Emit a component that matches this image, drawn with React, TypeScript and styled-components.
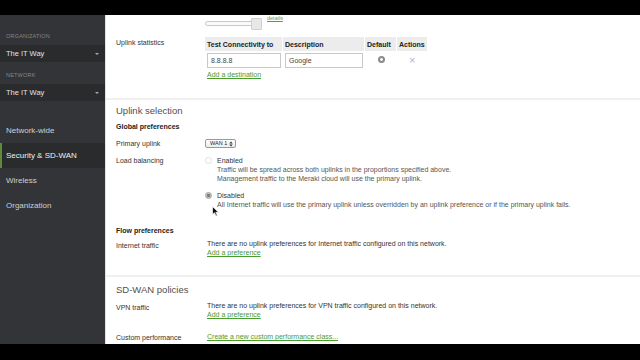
import styled, { createGlobalStyle } from "styled-components";

const GlobalStyle = createGlobalStyle`
  html, body {
    margin: 0;
    padding: 0;
    background: #000;
  }
  body {
    font-family: "Liberation Sans", Arial, Helvetica, sans-serif;
    -webkit-font-smoothing: antialiased;
  }
`;

const orgs = [
  { title: "ORGANIZATION", value: "The IT Way" },
  { title: "NETWORK", value: "The IT Way" },
];

const navItems = ["Network-wide", "Security & SD-WAN", "Wireless", "Organization"];

const App = () => {
  return (
    <Screen>
      <GlobalStyle />
      <BlackBar />
      <Body>
        <Sidebar>
          {orgs.map((o) => (
            <OrgBlock key={o.title}>
              <OrgTitle>{o.title}</OrgTitle>
              <OrgSelect>
                {o.value}
                <Caret />
              </OrgSelect>
            </OrgBlock>
          ))}
          <Nav>
            {navItems.map((item) => (
              <NavItem key={item} $active={item === "Security & SD-WAN"}>
                {item}
              </NavItem>
            ))}
          </Nav>
        </Sidebar>

        <Main>
          <Section $pt={0} $pb={19}>
            <SliderRow>
              <SliderTrack>
                <SliderThumb />
              </SliderTrack>
              <SmallLink>details</SmallLink>
            </SliderRow>

            <Row $mt={8}>
              <Label $pt={1}>Uplink statistics</Label>
              <div>
                <Table>
                  <thead>
                    <tr>
                      <Th $w={78}>Test Connectivity to</Th>
                      <Th $w={82}>Description</Th>
                      <Th $w={32}>Default</Th>
                      <Th $w={30}>Actions</Th>
                    </tr>
                  </thead>
                  <tbody>
                    <tr>
                      <Td>
                        <TextInput>8.8.8.8</TextInput>
                      </Td>
                      <Td>
                        <TextInput>Google</TextInput>
                      </Td>
                      <Td $center>
                        <DefaultDot />
                      </Td>
                      <Td $center>
                        <CloseMark>×</CloseMark>
                      </Td>
                    </tr>
                  </tbody>
                </Table>
                <Link $mt={2}>Add a destination</Link>
              </div>
            </Row>
          </Section>

          <Section $pt={4} $pb={18}>
            <Heading>Uplink selection</Heading>
            <SubHeading $mt={4}>Global preferences</SubHeading>

            <Row $mt={8}>
              <Label>Primary uplink</Label>
              <Value>
                <SelectBox>
                  WAN 1
                  <svg width="4" height="6" viewBox="0 0 4 6">
                    <path d="M0.3 2.4 L2 0.6 L3.7 2.4 Z M0.3 3.6 L2 5.4 L3.7 3.6 Z" fill="#333" />
                  </svg>
                </SelectBox>
              </Value>
            </Row>

            <Row $mt={8}>
              <Label>Load balancing</Label>
              <Value>
                <RadioOption>
                  <Radio $checked={false} />
                  <div>
                    <OptionTitle>Enabled</OptionTitle>
                    <OptionText>
                      Traffic will be spread across both uplinks in the proportions specified above.
                      <br />
                      Management traffic to the Meraki cloud will use the primary uplink.
                    </OptionText>
                  </div>
                </RadioOption>
                <RadioOption $mt={8}>
                  <Radio $checked />
                  <div>
                    <OptionTitle>Disabled</OptionTitle>
                    <OptionText>
                      All Internet traffic will use the primary uplink unless overridden by an uplink
                      preference or if the primary uplink fails.
                    </OptionText>
                  </div>
                </RadioOption>
              </Value>
            </Row>

            <SubHeading $mt={17}>Flow preferences</SubHeading>
            <Row $mt={4}>
              <Label $pt={2}>Internet traffic</Label>
              <Value>
                <Text>There are no uplink preferences for Internet traffic configured on this network.</Text>
                <Link>Add a preference</Link>
              </Value>
            </Row>
          </Section>

          <Section $pt={6} $pb={20}>
            <Heading>SD-WAN policies</Heading>
            <Row $mt={4}>
              <Label $pt={2}>VPN traffic</Label>
              <Value>
                <Text>There are no uplink preferences for VPN traffic configured on this network.</Text>
                <Link>Add a preference</Link>
              </Value>
            </Row>
            <Row $mt={13}>
              <Label $pt={1}>Custom performance classes</Label>
              <Value>
                <Link>Create a new custom performance class...</Link>
              </Value>
            </Row>
          </Section>

          <Cursor width="8" height="11" viewBox="0 0 8 11">
            <path d="M0.5 0.5 L0.5 8.5 L2.5 6.8 L4 10 L5.3 9.4 L3.8 6.3 L6.5 6.2 Z" fill="#111" stroke="#fff" strokeWidth="0.7" />
          </Cursor>
        </Main>
      </Body>
      <BlackBar $h={16} />
    </Screen>
  );
};

const Screen = styled.div`
  width: 640px;
  height: 360px;
  display: flex;
  flex-direction: column;
  overflow: hidden;
  background: #000;
`;

const BlackBar = styled.div<{ $h?: number }>`
  height: ${({ $h }) => $h ?? 15}px;
  flex-shrink: 0;
  background: #000;
  position: relative;
  z-index: 2;
`;

const Body = styled.div`
  flex: 1;
  display: flex;
  min-height: 0;
`;

const Sidebar = styled.div`
  width: 105px;
  flex-shrink: 0;
  background: #323437;
  padding-top: 18px;
  box-sizing: border-box;
`;

const OrgBlock = styled.div`
  margin-bottom: 10px;
`;

const OrgTitle = styled.div`
  font-size: 5.5px;
  letter-spacing: 0.2px;
  color: #85878a;
  padding-left: 6px;
  margin-bottom: 5px;
  line-height: 7px;
`;

const OrgSelect = styled.div`
  height: 17px;
  background: #2a2b2d;
  color: #e2e2e2;
  font-size: 7.5px;
  display: flex;
  align-items: center;
  justify-content: space-between;
  padding: 0 6px;
`;

const Caret = styled.span`
  width: 0;
  height: 0;
  border-left: 2.5px solid transparent;
  border-right: 2.5px solid transparent;
  border-top: 2.5px solid #aaa;
`;

const Nav = styled.div`
  margin-top: 17px;
  display: flex;
  flex-direction: column;
`;

const NavItem = styled.div<{ $active?: boolean }>`
  height: 25px;
  display: flex;
  align-items: center;
  padding-left: 4px;
  font-size: 8px;
  color: ${({ $active }) => ($active ? "#f0f0f0" : "#cfd0d1")};
  background: ${({ $active }) => ($active ? "#2a2b2d" : "transparent")};
  border-left: 2px solid ${({ $active }) => ($active ? "#5e8a3a" : "transparent")};
`;

const Main = styled.div`
  position: relative;
  flex: 1;
  background: #fff;
  border-left: 1px solid #e2e2e2;
  overflow: hidden;
  color: #333;
  line-height: 9px;
`;

const Section = styled.div<{ $pt?: number; $pb?: number }>`
  padding: ${({ $pt }) => $pt ?? 0}px 10px ${({ $pb }) => $pb ?? 20}px 10px;
  border-bottom: 2px solid #f0f0f0;
`;

const SliderRow = styled.div`
  display: flex;
  align-items: flex-start;
  padding-left: 89px;
  height: 14px;
`;

const SliderTrack = styled.div`
  margin-top: 6px;
  width: 50px;
  height: 3px;
  border: 1px solid #c8c8c8;
  border-radius: 3px;
  position: relative;
  background: #fafafa;
`;

const SliderThumb = styled.div`
  position: absolute;
  right: -6px;
  top: -4px;
  width: 9px;
  height: 10px;
  background: #e8e8e8;
  border: 1px solid #d0d0d0;
  border-radius: 1px;
`;

const SmallLink = styled.span`
  margin-left: 10px;
  font-size: 5.5px;
  line-height: 6px;
  color: #5f9c3a;
  text-decoration: underline;
`;

const Row = styled.div<{ $mt?: number }>`
  display: grid;
  grid-template-columns: 89px 1fr;
  margin-top: ${({ $mt }) => $mt ?? 0}px;
`;

const Label = styled.div<{ $pt?: number }>`
  font-size: 7px;
  color: #333;
  padding-top: ${({ $pt }) => $pt ?? 0}px;
  padding-right: 14px;
  line-height: 9px;
`;

const Value = styled.div`
  line-height: 9px;
`;

const Table = styled.table`
  border-collapse: separate;
  border-spacing: 0;
  font-size: 7px;
`;

const Th = styled.th<{ $w: number }>`
  width: ${({ $w }) => $w}px;
  height: 14px;
  background: #ececec;
  text-align: left;
  font-weight: bold;
  color: #222;
  padding: 0 2px;
  border-right: 1px solid #fff;
  box-sizing: border-box;
  white-space: nowrap;
`;

const Td = styled.td<{ $center?: boolean }>`
  padding: 2px 2px 0 2px;
  text-align: ${({ $center }) => ($center ? "center" : "left")};
  vertical-align: middle;
`;

const TextInput = styled.div`
  height: 15px;
  box-sizing: border-box;
  border: 1px solid #c9c9c9;
  display: flex;
  align-items: center;
  padding-left: 3px;
  font-size: 7px;
  color: #444;
`;

const DefaultDot = styled.span`
  display: inline-block;
  width: 7px;
  height: 7px;
  border-radius: 50%;
  background: radial-gradient(circle, #f2f2f2 0 1.2px, #8a8a8a 1.6px);
`;

const CloseMark = styled.span`
  font-size: 11px;
  color: #b5b5b5;
  line-height: 10px;
`;

const Link = styled.div<{ $mt?: number }>`
  font-size: 7px;
  color: #4d9a2f;
  text-decoration: underline;
  margin-top: ${({ $mt }) => $mt ?? 0}px;
  padding-left: 2px;
  line-height: 9px;
  white-space: nowrap;
`;

const Heading = styled.div`
  font-size: 9.5px;
  color: #4f4f4f;
  line-height: 14px;
`;

const SubHeading = styled.div<{ $mt?: number }>`
  font-size: 7px;
  font-weight: bold;
  color: #222;
  margin-top: ${({ $mt }) => $mt ?? 3}px;
  line-height: 9px;
`;

const SelectBox = styled.div`
  display: flex;
  width: fit-content;
  box-sizing: border-box;
  align-items: center;
  gap: 2px;
  height: 9px;
  padding: 0 2px 0 4px;
  border: 1px solid #999;
  border-radius: 2px;
  background: linear-gradient(#fff, #ececec);
  font-size: 5.5px;
  color: #222;
`;

const RadioOption = styled.div<{ $mt?: number }>`
  display: flex;
  gap: 5px;
  margin-top: ${({ $mt }) => $mt ?? 0}px;
`;

const Radio = styled.span<{ $checked?: boolean }>`
  flex-shrink: 0;
  width: 7px;
  height: 7px;
  margin-top: 1px;
  box-sizing: border-box;
  border-radius: 50%;
  border: 1px solid ${({ $checked }) => ($checked ? "#a4a4a4" : "#e0e0e0")};
  background: ${({ $checked }) =>
    $checked ? "radial-gradient(circle, #7a7a7a 0 1.3px, #c2c2c2 1.8px)" : "#fff"};
`;

const OptionTitle = styled.div`
  font-size: 7px;
  color: #333;
  line-height: 9px;
`;

const OptionText = styled.div`
  font-size: 7px;
  color: #555;
  line-height: 9px;
  white-space: nowrap;
`;

const Text = styled.div`
  font-size: 7px;
  color: #333;
  line-height: 9px;
  padding-left: 2px;
  white-space: nowrap;
`;

const Cursor = styled.svg`
  position: absolute;
  left: 106px;
  top: 191px;
`;

export default App;
